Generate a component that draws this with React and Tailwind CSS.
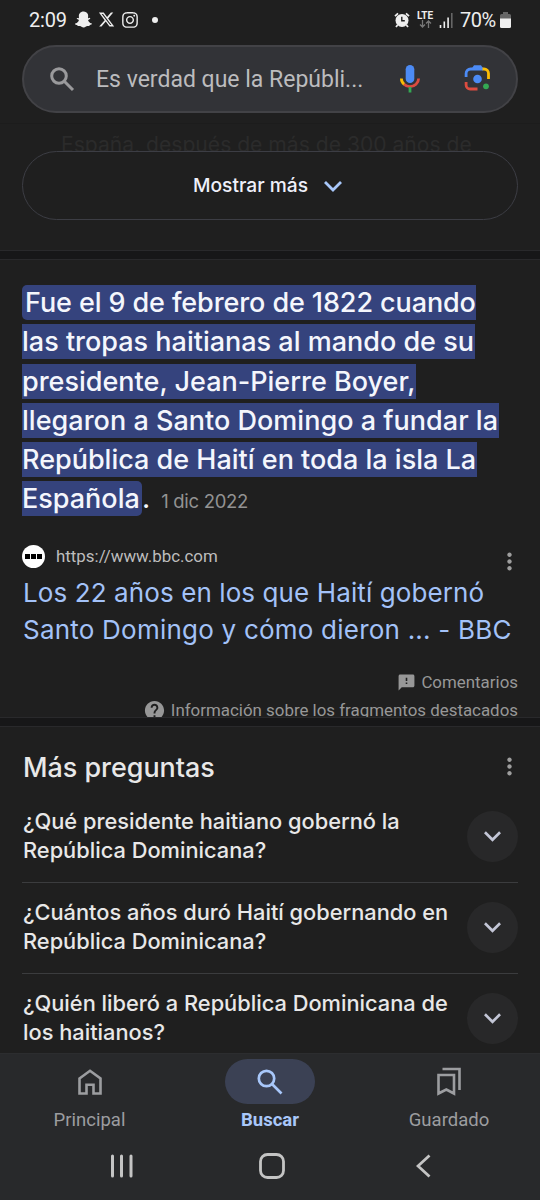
import React from 'react';
import { clsx } from 'clsx';
import { FaSnapchatGhost } from 'react-icons/fa';
import { FaXTwitter, FaInstagram } from 'react-icons/fa6';
import { MdMoreVert, MdFeedback, MdHelp } from 'react-icons/md';

const SNIPPET = [
    { text: 'Fue el 9 de febrero de 1822 cuando', className: 'w-[454px] pl-[3px] rounded-l-[5px] tracking-[-0.1px]' },
    { text: 'las tropas haitianas al mando de su', className: 'w-[453px]' },
    { text: 'presidente, Jean-Pierre Boyer,', className: 'w-[394px]' },
    { text: 'llegaron a Santo Domingo a fundar la', className: 'w-[477px] tracking-[0.02px]' },
    { text: 'República de Haití en toda la isla La', className: 'w-[455px]' }
];

const QUESTIONS = [
    { id: 1, lines: ['¿Qué presidente haitiano gobernó la', 'República Dominicana?'] },
    { id: 2, lines: ['¿Cuántos años duró Haití gobernando en', 'República Dominicana?'] },
    { id: 3, lines: ['¿Quién liberó a República Dominicana de', 'los haitianos?'] }
];

const StatusBar = () => (
    <div className="h-[45px] pl-[29px] pr-[29px] pb-[6px] flex items-center justify-between text-[#eeeeee] font-['Roboto',sans-serif]">
        <div className="flex items-center">
            <span className="w-[46px] text-[20px] leading-none tracking-[-0.2px]">2:09</span>
            <FaSnapchatGhost size={17} />
            <FaXTwitter size={17} className="ml-[6px]" />
            <FaInstagram size={18} className="ml-[6px]" />
            <span className="ml-[13px] size-[6px] rounded-full bg-[#eeeeee]" />
        </div>
        <div className="flex items-center">
            <svg width="16" height="16" viewBox="0 0 16 16">
                <circle cx="8" cy="8.4" r="6.5" fill="currentColor" />
                <path d="M1 4.2 4 1.4M15 4.2 12 1.4M3.6 13 2 15M12.4 13 14 15" stroke="currentColor" strokeWidth="1.8" />
                <path d="M7.800 4.800v4h3" fill="none" stroke="#1f1f1f" strokeWidth="1.4" />
            </svg>
            <div className="ml-[6px] mr-px w-[18px] flex flex-col items-center">
                <span className="text-[10px] leading-[9px] font-bold">LTE</span>
                <svg width="13" height="8" viewBox="0 0 13 8" fill="none" stroke="#777" strokeWidth="1.3">
                    <path d="M3.5 0v7M1 4.5 3.5 7 6 4.5M9.5 8V1M7 3.5 9.5 1 12 3.5" />
                </svg>
            </div>
            <svg className="ml-[4px] mr-px" width="14" height="16" viewBox="0 0 14 16" strokeWidth="1.6">
                <path d="M1.500 16v-3M5.300 16V9.500M9.100 16V5.500" stroke="#eee" />
                <path d="M12.800 16V1" stroke="#666" />
            </svg>
            <span className="ml-[6px] w-[40px] text-[20px] leading-none tracking-[-0.5px]">70%</span>
            <svg width="11" height="16" viewBox="0 0 11 16">
                <path d="M3 0h5v2h1.500a1.500 1.500 0 0 1 1.500 1.500V7H0V3.500A1.500 1.500 0 0 1 1.500 2H3z" fill="#666" />
                <path d="M0 6.500h11v8a1.500 1.500 0 0 1-1.500 1.500h-8A1.500 1.500 0 0 1 0 14.500z" fill="#eee" />
            </svg>
        </div>
    </div>
);

const SearchBar = () => (
    <div className="mx-[22px] h-[68px] flex items-center rounded-full border-2 border-[#424246] bg-[#323337]">
        <svg className="ml-[26px]" width="25" height="25" viewBox="0 0 25 25" fill="none" stroke="#9a9a9c" strokeWidth="3">
            <circle cx="9" cy="9" r="7.300" />
            <path d="m14.500 14.500 8.500 8.500" />
        </svg>
        <span className="ml-[21px] w-[304px] whitespace-nowrap font-['Roboto',sans-serif] text-[23px] leading-none text-[#bcbcbe]">
            Es verdad que la Repúbli...
        </span>
        <svg width="20" height="28" viewBox="0 0 20 28" fill="none" strokeWidth="2.800">
            <rect x="5.700" y="0" width="8.600" height="18" rx="4.300" fill="#4c8bf5" />
            <path d="M1.400 13.500c0 2.500 1 4.400 2.800 5.900" stroke="#fbbc04" />
            <path d="M4 19.200c3.500 3.300 8.500 3.300 12 0 1.700-1.600 2.600-3.300 2.600-5.700" stroke="#dc4c40" />
            <path d="M10 22v5.500" stroke="#34a853" />
        </svg>
        <svg className="ml-[44px] mb-[3px]" width="27" height="27" viewBox="0 0 27 27" fill="none" strokeWidth="2.800">
            <path d="M2.100 13V9.500a4.500 4.500 0 0 1 4.500-4.500H19" stroke="#4c8bf5" />
            <path d="M7.500 5 10 1.200h7L19.500 5z" fill="#4c8bf5" />
            <path d="M18.500 5h1.500a4.500 4.500 0 0 1 4.500 4.500V15" stroke="#fbbc04" />
            <path d="M2.100 18v3a4 4 0 0 0 4 4H13.500" stroke="#dc4c40" />
            <circle cx="13.500" cy="15" r="4.300" fill="#4c8bf5" />
            <circle cx="22" cy="22.300" r="2.900" fill="#34a853" />
        </svg>
    </div>
);

const Chevron = ({ width, height, className }) => (
    <svg className={className} width={width} height={height} viewBox="0 0 18 11" fill="none" stroke="currentColor" strokeWidth="2.800">
        <path d="m1 1 8 8 8-8" />
    </svg>
);

// Dark band between two result blocks
const Divider = () => <div className="h-[10px] shrink-0 border-y border-[#29292b] bg-[#171718]" />;

const FeaturedSnippet = () => (
    <section className="h-[457px] shrink-0 overflow-hidden px-[22px] pt-[25px] flex flex-col">
        <div className="flex flex-col gap-[4.300px] text-[27px] leading-[35px] font-medium text-[#f4f6fc]">
            {SNIPPET.map((line) => (
                <div key={line.text} className={clsx('h-[35px] whitespace-nowrap bg-[#35437d]', line.className)}>
                    {line.text}
                </div>
            ))}
            <div className="h-[35px] flex whitespace-nowrap">
                <span className="w-[120px] rounded-r-[5px] bg-[#35437d]">Española</span>
                <span>.</span>
                <span className="ml-[11px] pt-[3px] text-[18.500px] font-normal text-[#929292] tracking-[-0.3px]">1 dic 2022</span>
            </div>
        </div>

        <div className="mt-[25px] h-[31px] flex items-center justify-between">
            <div className="flex items-center">
                <div className="size-[23px] rounded-full bg-white flex items-center justify-center gap-px">
                    <span className="size-[5px] bg-black" />
                    <span className="size-[5px] bg-black" />
                    <span className="size-[5px] bg-black" />
                </div>
                <span className="ml-[11px] pb-px font-['Roboto',sans-serif] text-[16.900px] text-[#bdbdbd]">https://www.bbc.com</span>
            </div>
            <MdMoreVert size={27} className="-mr-[5px] mt-[10px] text-[#9e9e9e]" />
        </div>
        <h3 className="mt-[2px] pl-px whitespace-nowrap text-[26px] leading-[37px] text-[#a3c2f8]">
            <span className="block tracking-[0.1px]">Los 22 años en los que Haití gobernó</span>
            <span className="block tracking-[0.22px]">Santo Domingo y cómo dieron ... - BBC</span>
        </h3>

        <div className="mt-[20px] flex flex-col items-end font-['Roboto',sans-serif] text-[16.900px] leading-[28px] text-[#979797]">
            <div className="flex items-center">
                <MdFeedback size={19} className="mr-[5px]" />
                <span>Comentarios</span>
            </div>
            <div className="flex items-center whitespace-nowrap">
                <MdHelp size={23} className="mr-[5px]" />
                <span>Información sobre los fragmentos destacados</span>
            </div>
        </div>
    </section>
);

const RelatedQuestions = () => (
    <section className="h-[326px] overflow-hidden px-[22px]">
        <div className="h-[80px] flex items-center justify-between">
            <h2 className="pl-px pt-px text-[26.900px] leading-none font-medium text-[#e8e8e8]">Más preguntas</h2>
            <MdMoreVert size={27} className="-mr-[5px] mb-[2px] text-[#9e9e9e]" />
        </div>
        <div className="-mt-[15px] divide-y divide-[#3b3c3e]">
            {QUESTIONS.map((question) => (
                <div key={question.id} className="h-[91px] pt-[15px] flex justify-between">
                    <div className="whitespace-nowrap pl-px text-[21.800px] leading-[28.500px] font-medium text-[#e8e8e8]">
                        {question.lines.map((line) => (
                            <span key={line} className="block">{line}</span>
                        ))}
                    </div>
                    <button className="mt-[4px] size-[51px] shrink-0 rounded-full bg-[#282829] flex items-center justify-center text-[#c3c6d6]">
                        <Chevron width={17} height={11} />
                    </button>
                </div>
            ))}
        </div>
    </section>
);

const BottomNav = () => (
    <nav className="h-[147px] bg-[#28292b] border-t border-[#2c2d2f] font-['Roboto',sans-serif]">
        <div className="h-[84px] pt-[5px] grid grid-cols-3 text-[18.500px] leading-[33px] text-[#9c9da0]">
            <div className="pr-px flex flex-col items-center">
                <div className="h-[45px] flex items-center">
                    <svg width="24" height="26" viewBox="0 0 24 26" fill="none" stroke="currentColor" strokeWidth="2.600">
                        <path d="M1.500 9.500 12 1.800l10.500 7.700v15h-7v-8.700h-7v8.700h-7z" />
                    </svg>
                </div>
                <span>Principal</span>
            </div>
            <div className="flex flex-col items-center text-[#a8c7fa]">
                <div className="h-[45px] w-[90px] rounded-full bg-[#3b4154] flex items-center justify-center">
                    <svg width="26" height="26" viewBox="0 0 26 26" fill="none" stroke="currentColor" strokeWidth="2.700">
                        <circle cx="9.500" cy="9.500" r="7.700" />
                        <path d="m15 15 9.500 9.500" />
                    </svg>
                </div>
                <span className="font-bold">Buscar</span>
            </div>
            <div className="pr-[2px] flex flex-col items-center">
                <div className="h-[45px] flex items-center">
                    <svg width="24" height="29" viewBox="0 0 24 29" fill="none" stroke="currentColor" strokeWidth="2.600">
                        <path d="M1.500 8h15.500v18.500l-7.700-4-7.800 4z" />
                        <path d="M5.500 2h17v21" />
                    </svg>
                </div>
                <span>Guardado</span>
            </div>
        </div>
        {/* Android navigation keys */}
        <div className="h-[56px] pl-[110px] pr-[109px] flex items-center justify-between text-[#c4c4c4]">
            <svg width="24" height="24" viewBox="0 0 24 24" stroke="currentColor" strokeWidth="3" strokeLinecap="round">
                <path d="M2.500 2v20M11.500 2v20M21 2v20" />
            </svg>
            <svg className="mr-[6px]" width="26" height="26" viewBox="0 0 26 26" fill="none" stroke="currentColor" strokeWidth="2.800">
                <rect x="1.500" y="1.500" width="23" height="23" rx="7" />
            </svg>
            <svg width="15" height="24" viewBox="0 0 15 24" fill="none" stroke="currentColor" strokeWidth="2.800">
                <path d="M13.500 1.500 2 12l11.500 10.500" />
            </svg>
        </div>
    </nav>
);

const App = () => {
    return (
        <div className="w-[540px] h-[1200px] overflow-hidden flex flex-col bg-[#1f1f1f] font-['Inter',sans-serif]">
            <header className="h-[124px] shrink-0 border-b border-[#1c1c1c]">
                <StatusBar />
                <SearchBar />
            </header>

            <section className="h-[126px] shrink-0 px-[22px] flex flex-col">
                <p className="h-[27px] overflow-hidden pl-[39px] pt-[7px] whitespace-nowrap text-[21.100px] leading-[28px] text-[#2b2b2b]">
                    España, después de más de 300 años de
                </p>
                <button className="h-[69px] pr-[5px] rounded-full border border-[#3c3d44] flex items-center justify-center text-[19.200px] font-medium text-[#eef0fa]">
                    Mostrar más
                    <Chevron width={18} height={11} className="ml-[16px] mt-[2px] text-[#a8c7fa]" />
                </button>
            </section>
            <Divider />
            <FeaturedSnippet />
            <Divider />
            <RelatedQuestions />
            <BottomNav />
        </div>
    );
};

export default App;
